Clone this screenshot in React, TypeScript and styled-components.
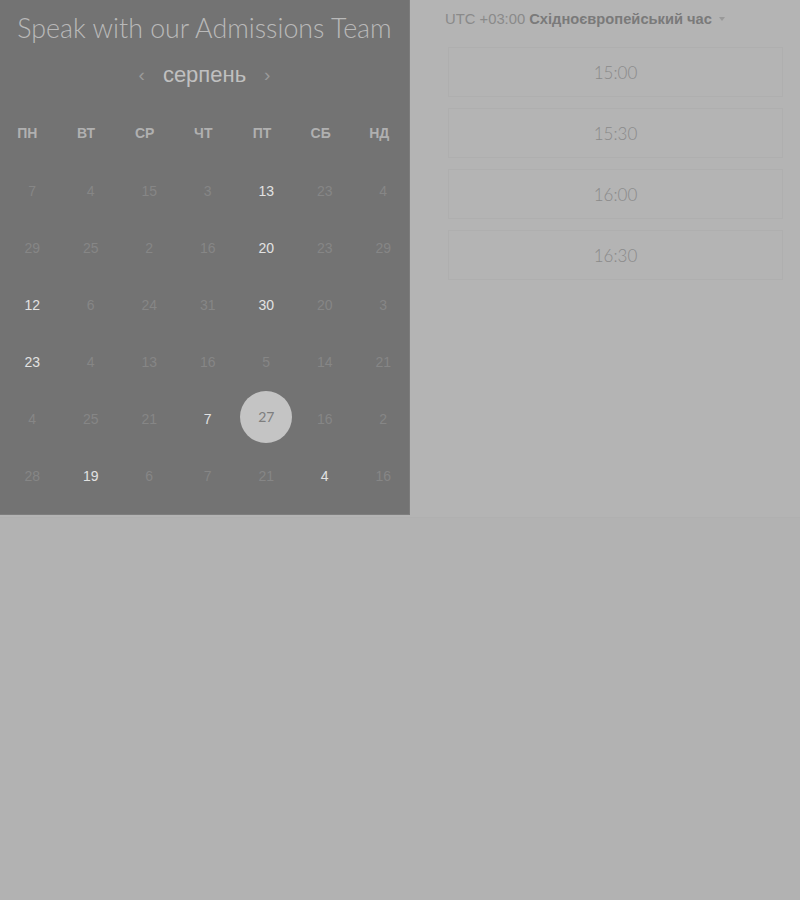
import React from "react";
import styled, { createGlobalStyle } from "styled-components";

const Global = createGlobalStyle`
  html, body { margin: 0; padding: 0; background: #b2b2b2; }
  body { font-family: "Liberation Sans", Arial, sans-serif; }
`;

const Widget = styled.div`
  display: flex;
  height: 517px;
  background: #b4b4b4;
  border-bottom: 1px solid #b0b0b0;
`;

const CalendarPanel = styled.section`
  width: 410px;
  height: 515px;
  box-sizing: border-box;
  background: #737373;
  border-right: 1px solid #7c7c7c;
  border-bottom: 1px solid #7e7e7e;
  display: flex;
  flex-direction: column;
`;

const Title = styled.h1`
  margin: 0;
  padding-top: 10px;
  height: 46px;
  box-sizing: border-box;
  font-family: "Lato", "Liberation Sans", sans-serif;
  font-weight: 300;
  font-size: 26.8px;
  line-height: 36px;
  color: #b9b9b9;
  text-align: center;
  white-space: nowrap;
`;

const MonthRow = styled.div`
  height: 58px;
  display: flex;
  align-items: center;
  justify-content: center;
  gap: 18px;
`;

const Chevron = styled.span`
  color: #9a9a9a;
  font-size: 19px;
  line-height: 1;
  display: flex;
  margin-top: -2px;
`;

const MonthName = styled.span`
  font-family: "Liberation Sans", Arial, sans-serif;
  font-size: 22px;
  color: #c0c0c0;
`;

const WeekdayRow = styled.div`
  display: grid;
  grid-template-columns: repeat(7, 58.67px);
  margin-left: -2px;
  height: 57px;
  align-items: center;
`;

const Weekday = styled.span`
  text-align: center;
  font-weight: 700;
  font-size: 14px;
  color: #b0b0b0;
`;

const DaysGrid = styled.div`
  display: grid;
  grid-template-columns: repeat(7, 58.5px);
  grid-auto-rows: 57px;
  padding-left: 3px;
  padding-top: 1px;
`;

const DayCell = styled.div`
  display: flex;
  align-items: center;
  justify-content: center;
`;

const Day = styled.span<{ $available?: boolean; $selected?: boolean }>`
  display: flex;
  align-items: center;
  justify-content: center;
  width: 52px;
  height: 52px;
  border-radius: 50%;
  font-size: 14px;
  font-family: ${(p) => (p.$selected ? `"Lato", "Liberation Sans", sans-serif` : `"Liberation Sans", Arial, sans-serif`)};
  color: ${(p) => (p.$selected ? "#7e7e7e" : p.$available ? "#e2e2e2" : "#868686")};
  background: ${(p) => (p.$selected ? "#c4c4c4" : "transparent")};
  margin-top: ${(p) => (p.$selected ? "-4px" : "0")};
`;

const TimesPanel = styled.section`
  flex: 1;
  padding: 10px 17px 0 35px;
  display: flex;
  flex-direction: column;
`;

const TimezoneButton = styled.div`
  display: flex;
  align-items: center;
  font-size: 14.8px;
  color: #8a8a8a;
  height: 18px;
  white-space: nowrap;
`;

const Zone = styled.strong`
  margin-left: 4px;
  color: #7a7a7a;
  font-weight: 700;
  font-size: 14.7px;
`;

const Caret = styled.span`
  margin-left: 7px;
  width: 0;
  height: 0;
  border-left: 3.5px solid transparent;
  border-right: 3.5px solid transparent;
  border-top: 4px solid #999999;
`;

const SlotList = styled.div`
  margin-top: 19px;
  margin-left: 3px;
  display: flex;
  flex-direction: column;
  gap: 11px;
`;

const Slot = styled.div`
  height: 50px;
  box-sizing: border-box;
  border: 1px solid #afafaf;
  display: flex;
  align-items: center;
  justify-content: center;
  font-family: "Lato", "Liberation Sans", sans-serif;
  font-weight: 300;
  font-size: 17px;
  color: #8a8a8a;
`;

const weekdays = ["ПН", "ВТ", "СР", "ЧТ", "ПТ", "СБ", "НД"];

type D = { n: number; a?: boolean; s?: boolean };
const rows: D[][] = [
  [{ n: 7 }, { n: 4 }, { n: 15 }, { n: 3 }, { n: 13, a: true }, { n: 23 }, { n: 4 }],
  [{ n: 29 }, { n: 25 }, { n: 2 }, { n: 16 }, { n: 20, a: true }, { n: 23 }, { n: 29 }],
  [{ n: 12, a: true }, { n: 6 }, { n: 24 }, { n: 31 }, { n: 30, a: true }, { n: 20 }, { n: 3 }],
  [{ n: 23, a: true }, { n: 4 }, { n: 13 }, { n: 16 }, { n: 5 }, { n: 14 }, { n: 21 }],
  [{ n: 4 }, { n: 25 }, { n: 21 }, { n: 7, a: true }, { n: 27, s: true }, { n: 16 }, { n: 2 }],
  [{ n: 28 }, { n: 19, a: true }, { n: 6 }, { n: 7 }, { n: 21 }, { n: 4, a: true }, { n: 16 }],
];

const times = ["15:00", "15:30", "16:00", "16:30"];

export default function App() {
  return (
    <>
      <Global />
      <Widget>
        <CalendarPanel>
          <Title>Speak with our Admissions Team</Title>
          <MonthRow>
            <Chevron>‹</Chevron>
            <MonthName>серпень</MonthName>
            <Chevron>›</Chevron>
          </MonthRow>
          <WeekdayRow>
            {weekdays.map((w) => (
              <Weekday key={w}>{w}</Weekday>
            ))}
          </WeekdayRow>
          <DaysGrid>
            {rows.flat().map((d, i) => (
              <DayCell key={i}>
                <Day $available={d.a} $selected={d.s}>
                  {d.n}
                </Day>
              </DayCell>
            ))}
          </DaysGrid>
        </CalendarPanel>
        <TimesPanel>
          <TimezoneButton>
            UTC +03:00<Zone>Східноєвропейський час</Zone>
            <Caret />
          </TimezoneButton>
          <SlotList>
            {times.map((t) => (
              <Slot key={t}>{t}</Slot>
            ))}
          </SlotList>
        </TimesPanel>
      </Widget>
    </>
  );
}
